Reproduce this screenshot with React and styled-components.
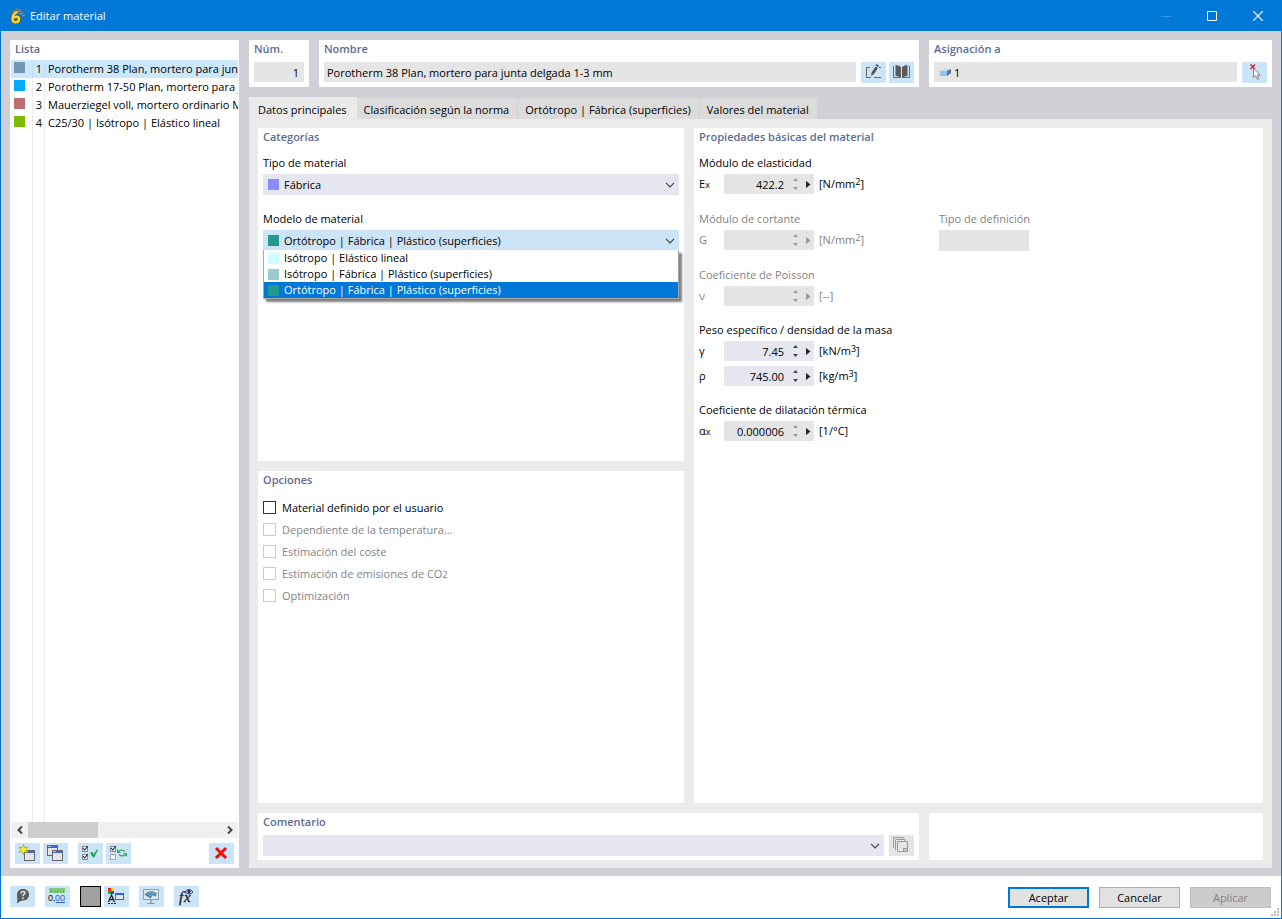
import React, { useState } from 'react';
import styled, { createGlobalStyle, css } from 'styled-components';

const GlobalStyle = createGlobalStyle`
  * {
    box-sizing: border-box;
  }

  body {
    margin: 0;
    font-family: 'Open Sans', 'Noto Sans', sans-serif;
    font-size: 11px;
    line-height: 18px;
    color: #000;
  }

  button, input, select {
    font: inherit;
    color: inherit;
    border: none;
    border-radius: 0;
    padding: 0;
    margin: 0;
  }
`;

// Dialog window frame
const Window = styled.div`
  display: flex;
  flex-direction: column;
  min-height: 100vh;
  border: 1px solid #0078d7;
  border-top: none;
  background-color: #fff;
`;

const TitleBar = styled.header`
  display: flex;
  align-items: center;
  height: 31px;
  padding-left: 8px;
  background-color: #0078d7;
  color: #fff;
`;

const WindowTitle = styled.h1`
  flex: 1;
  margin: 0 0 0 5px;
  font-size: 11px;
  font-weight: normal;
`;

const CaptionButton = styled.button`
  display: flex;
  align-items: center;
  justify-content: center;
  width: 46px;
  height: 31px;
  background: none;
  color: ${({ disabled }) => (disabled ? '#3b97e0' : '#fff')};
`;

const Body = styled.main`
  flex: 1;
  display: flex;
  gap: 10px;
  padding: 9px 9px 8px;
  background-color: #d1d0d6;
`;

const Panel = styled.section`
  display: flex;
  flex-direction: column;
  min-width: 0;
  padding: 0 5px 4px;
  background-color: #fff;
`;

const PanelTitle = styled.h2`
  margin: 0 0 ${({ $space }) => $space || 4}px;
  font-size: 11px;
  line-height: 18px;
  font-weight: 600;
  color: #5c6c93;
`;

// Left column with the list of materials
const ListPanel = styled(Panel)`
  width: 229px;
  padding: 0 1px 4px;
`;

const ListTitle = styled(PanelTitle)`
  margin: 0 0 2px 4px;
`;

const MaterialList = styled.ul`
  flex: 1;
  margin: 0;
  padding: 0;
  list-style: none;
  overflow: hidden;
  background: linear-gradient(#ebebeb, #ebebeb) 21px 0 / 1px 100% no-repeat,
    linear-gradient(#ebebeb, #ebebeb) 33px 0 / 1px 100% no-repeat;
`;

const MaterialRow = styled.li`
  display: grid;
  grid-template-columns: 11px 17px 1fr;
  align-items: center;
  height: 18px;
  padding-left: 3px;
  white-space: nowrap;
  cursor: default;
  ${({ $selected }) => $selected && css`
    background-color: rgba(153, 209, 255, 0.5);
  `}
`;

const RowNumber = styled.span`
  text-align: right;
`;

const RowName = styled.span`
  padding-left: 6px;
`;

const Swatch = styled.span`
  flex: none;
  width: 11px;
  height: 11px;
  background-color: ${({ $color }) => $color};
`;

const RowSwatch = styled(Swatch)`
  margin-bottom: 3px;
`;

const ScrollBar = styled.div`
  display: flex;
  justify-content: space-between;
  height: 16px;
  margin-bottom: 5px;
  background-color: #f0f0f0;
`;

const ScrollArrow = styled.button`
  display: flex;
  align-items: center;
  justify-content: center;
  width: 17px;
  background: none;
`;

const ScrollThumb = styled.div`
  width: 70px;
  margin-right: auto;
  background-color: #cdcdcd;
`;

const Toolbar = styled.div`
  display: flex;
  gap: 3px;
  padding: 0 4px;
`;

const IconButton = styled.button`
  flex: none;
  width: 25px;
  height: 21px;
  margin-left: ${({ $space }) => $space || '0'};
  background-color: ${({ disabled }) => (disabled ? '#e5e5e5' : '#cce4f7')};

  svg {
    display: block;
  }
`;

const Content = styled.div`
  flex: 1;
  display: flex;
  flex-direction: column;
  min-width: 0;
`;

const HeaderRow = styled.div`
  display: grid;
  grid-template-columns: 60px 600fr 343fr;
  gap: 10px;
  margin-bottom: 10px;
`;

const FieldLine = styled.div`
  display: flex;
  gap: 5px;
`;

const ButtonPair = styled.div`
  display: flex;
  gap: 3px;
`;

const TextInput = styled.input`
  flex: 1;
  width: 100%;
  min-width: 0;
  height: 20px;
  padding: 1px 5px 0 3px;
  background-color: #e5e5e5;
  text-align: ${({ $align }) => $align || 'left'};
  outline: none;
`;

const AssignBox = styled.div`
  flex: 1;
  display: flex;
  align-items: center;
  height: 20px;
  padding-left: 6px;
  background-color: #e5e5e5;
`;

const TabList = styled.div`
  display: flex;
  align-items: flex-end;
  height: 22px;
`;

const Tab = styled.button`
  height: ${({ $active }) => ($active ? 23 : 21)}px;
  margin-bottom: ${({ $active }) => ($active ? -1 : 0)}px;
  padding: ${({ $active }) => ($active ? '2px 9px 0' : '2px 8px 0 7px')};
  border-right: 1px solid ${({ $active }) => ($active ? '#ebebeb' : '#d1d0d6')};
  background-color: ${({ $active }) => ($active ? '#ebebeb' : '#dcdcdc')};
`;

const TabPage = styled.div`
  flex: 1;
  display: flex;
  flex-direction: column;
  gap: 10px;
  padding: 9px 9px 8px;
  background-color: #ebebeb;
`;

const MainGrid = styled.div`
  flex: 1;
  display: grid;
  grid-template-columns: 426fr 569fr;
  grid-template-rows: 1fr 1fr;
  gap: 10px;
`;

const TallPanel = styled(Panel)`
  grid-column: 2;
  grid-row: 1 / 3;
`;

const BottomGrid = styled.div`
  display: grid;
  grid-template-columns: 661fr 334fr;
  gap: 10px;
`;

const FieldLabel = styled.label`
  display: block;
  margin-bottom: 2px;
  color: ${({ $muted }) => ($muted ? '#838383' : '#000')};
`;

const SelectGroup = styled.div`
  position: relative;
  margin-bottom: 15px;
`;

const SelectBox = styled.div`
  flex: 1;
  display: flex;
  align-items: center;
  gap: 5px;
  height: 21px;
  padding: 0 4px 0 5px;
  background-color: ${({ $open }) => ($open ? '#cce4f7' : '#e6e6f0')};
`;

const Select = styled.select`
  flex: 1;
  min-width: 0;
  height: 20px;
  appearance: none;
  background: none;
  outline: none;
`;

const ComboInput = styled.input`
  flex: 1;
  min-width: 0;
  background: none;
  outline: none;
`;

// Opened drop-down, lies over the panel
const OptionList = styled.ul`
  position: absolute;
  top: 40px;
  left: 0;
  right: 0;
  margin: 0;
  padding: 0;
  list-style: none;
  border: 1px solid #a8a8a8;
  border-top: none;
  background-color: #fff;
  box-shadow: 3px 3px 2px rgba(0, 0, 0, 0.5);
`;

const Option = styled.li`
  display: flex;
  align-items: center;
  gap: 5px;
  height: 16px;
  padding-left: 4px;
  cursor: default;
  background-color: ${({ $selected }) => ($selected ? '#0078d7' : '#fff')};
  color: ${({ $selected }) => ($selected ? '#fff' : '#000')};
`;

const CheckRow = styled.label`
  display: flex;
  align-items: center;
  gap: 6px;
  height: 22px;
  color: ${({ $muted }) => ($muted ? '#838383' : '#000')};
`;

const CheckBox = styled.input`
  appearance: none;
  width: 13px;
  height: 13px;
  border: 1px solid #333;
  background-color: #fff;

  &:checked {
    background-color: #5c6c93;
  }

  &:disabled {
    border-color: #ccc;
  }
`;

// Group of numeric values under one caption
const PropertyGroup = styled.div`
  display: flex;
  margin-bottom: ${({ $space }) => $space || 15}px;
`;

const PropertyColumn = styled.div`
  width: 240px;
  white-space: nowrap;
  color: ${({ $muted }) => ($muted ? '#838383' : '#000')};
`;

const ValueRow = styled.div`
  display: flex;
  align-items: center;
  height: 20px;

  & + & {
    margin-top: 5px;
  }
`;

const Symbol = styled.label`
  width: 25px;
`;

const Small = styled.span`
  font-size: 9px;
  line-height: 0;
`;

const Raised = styled.sup`
  font-size: 9px;
  line-height: 0;
  vertical-align: 3px;
`;

const SpinBox = styled.div`
  display: flex;
  align-items: center;
  width: 90px;
  height: 20px;
  margin-right: 5px;
  background-color: ${({ $editable }) => ($editable ? '#e6e6f0' : '#e5e5e5')};
`;

const SpinInput = styled.input`
  width: 60px;
  height: 20px;
  padding-top: 1px;
  background: none;
  text-align: right;
  outline: none;
`;

const ShortField = styled.input`
  display: block;
  width: 90px;
  height: 21px;
  background-color: #e5e5e5;
`;

const Footer = styled.footer`
  display: flex;
  gap: 10px;
  height: 42px;
  padding: 10px 10px 0 9px;
`;

const FooterTools = styled.div`
  flex: 1;
  display: flex;
  gap: 10px;
`;

const DialogActions = styled.div`
  display: flex;
  gap: 10px;
  padding-top: 1px;
`;

const ColorButton = styled.button`
  width: 21px;
  height: 21px;
  border: 1px solid #000;
  background-color: #a0a0a0;
`;

const DialogButton = styled.button`
  width: 81px;
  height: 21px;
  border: ${({ $primary }) => ($primary ? '2px solid #0078d7' : '1px solid #adadad')};
  background-color: #e1e1e1;

  &:disabled {
    border-color: #bfbfbf;
    background-color: #ccc;
    color: #838383;
  }
`;

// Resize grip in the window corner
const Grip = styled.svg`
  position: absolute;
  right: 3px;
  bottom: 3px;
`;

const Glyph = ({ children }) => (
  <svg width="25" height="21" viewBox="0 0 25 21" fill="none" aria-hidden="true">
    {children}
  </svg>
);

const Chevron = () => (
  <svg width="10" height="6" viewBox="0 0 10 6" fill="none" stroke="#444" strokeWidth="1.2" aria-hidden="true">
    <path d="M1 .8 5 4.8 9 .8" />
  </svg>
);

const SpinArrows = ({ color, next }) => (
  <svg width="27" height="20" viewBox="0 0 27 20" aria-hidden="true">
    <path d="M9 7h5L11.5 4zM9 13h5l-2.500 3z" fill={color} />
    <path d="M22 7v7l4.500-3.500z" fill={next} />
  </svg>
);

const AppIcon = () => (
  <svg width="16" height="18" viewBox="0 0 16 18" aria-hidden="true">
    <path d="M2 5 7 1l6 2 3 7-3-1-1-3z" fill="#5d6b79" />
    <path d="m4 5 5-3M7 6l5-3M10 7l4-1M13 9l3-1" stroke="#a5b2bd" strokeWidth=".7" />
    <path d="M8.500 5C5 5 3.500 9 3.500 12c0 5 6.500 4 6.500 0 0-3-4.500-3-5.500-1" fill="none" stroke="#6f5510" strokeWidth="4" />
    <path d="M8.500 5C5 5 3.500 9 3.500 12c0 5 6.500 4 6.500 0 0-3-4.500-3-5.500-1" fill="none" stroke="#ffd83a" strokeWidth="2.4" />
  </svg>
);

const MiniWindow = ({ x, y }) => (
  <g shapeRendering="crispEdges">
    <rect x={x} y={y} width="11" height="11" fill="#666" />
    <rect x={x + 1} y={y + 1} width="9" height="2" fill="#3c62e8" />
    <rect x={x + 1} y={y + 1} width="3" height="1" fill="#b8c6ec" />
    <rect x={x + 1} y={y + 3} width="9" height="7" fill="#e2e6ea" />
  </g>
);

const NewIcon = () => (
  <Glyph>
    <MiniWindow x={9} y={7} />
    <path d="m8.500 1.500 1.200 3.200 3.300-.7-2 2.600 2 2.800-3.300-.7-1.200 3.300-1.200-3.300L4 9.400l2-2.800L4 4l3.300.7z" fill="#fff21c" stroke="#8b8b30" strokeWidth=".6" />
  </Glyph>
);

const CopyIcon = () => (
  <Glyph>
    <MiniWindow x={4} y={2} />
    <MiniWindow x={9} y={7} />
  </Glyph>
);

const SmallCheck = ({ x, y, checked }) => (
  <g>
    <rect x={x + 0.5} y={y + 0.5} width="5" height="5" fill="#eef5fa" stroke={checked ? '#888' : '#aaa'} />
    {checked && <path d={`M${x + 1} ${y + 2}l1.800 2 3-4`} stroke="#222" strokeWidth="1.1" />}
  </g>
);

const SelectAllIcon = () => (
  <Glyph>
    <SmallCheck x={4} y={3} checked />
    <SmallCheck x={4} y={11} checked />
    <path d="M12 9.500 14.500 9l1 2.500L19 6.500l1 .5-4 7.500h-1z" fill="#14a44a" />
  </Glyph>
);

const InvertIcon = () => (
  <Glyph>
    <SmallCheck x={4} y={3} checked />
    <SmallCheck x={4} y={11} />
    <path d="M13 8q3-2 6 .5M19 12q-3 2-6-.5" stroke="#3ba566" strokeWidth="1.4" />
    <path d="M11 6v4h4zM21 14v-4h-4z" fill="#3ba566" />
  </Glyph>
);

const DeleteIcon = () => (
  <Glyph>
    <path d="m7 5 10 10M17 5 7 15" stroke="#fa0808" strokeWidth="3" />
  </Glyph>
);

const EditIcon = () => (
  <Glyph>
    <path d="M9 5.500H5.500v10H10M13 15.500h7M18 5.500h2" stroke="#666" />
    <path d="m10 14 .7-3.500L14.500 4.500l2.500 1.500-4 6z" fill="#555" />
    <path d="M14.500 3.500 15.500 2l2.500 1.600-.8 1.500z" fill="#555" />
  </Glyph>
);

const BookIcon = () => (
  <Glyph>
    <path d="M6.500 3q3 0 5.500 2v11q-2.500-2-5.500-2zM18.500 3q-3 0-5.500 2v11q2.500-2 5.500-2z" fill="#5a5a5a" />
    <path d="M4.500 4v11.500h7M20.500 4v11.500h-7" stroke="#6a6a6a" />
  </Glyph>
);

const PickIcon = () => (
  <Glyph>
    <path d="M8.500 2.500 13 7M13 2.500 8.500 7" stroke="#e01818" strokeWidth="1.3" />
    <path d="M11.500 6v9.500l2-2 2 4 1.500-1-1.800-3.500h3z" fill="#fff" stroke="#777" strokeWidth=".9" />
  </Glyph>
);

const SolidIcon = () => (
  <svg width="11" height="7" viewBox="0 0 11 7" aria-hidden="true">
    <path d="M0 2 3.500 0H11L7 2z" fill="#c9dcec" />
    <path d="M0 2h7v5H0z" fill="#8fc3f3" />
    <path d="m7 2 4-2v4L7 7z" fill="#55708f" />
  </svg>
);

const PagesIcon = () => (
  <Glyph>
    <path d="M4.500 13v-10.500H14v2M6.500 15V4.500H16v2" stroke="#999" />
    <path d="M8.500 6.500h10v10h-10zM14.500 16v-2.500H18M14.500 13.500l3.500 2.500" stroke="#999" />
  </Glyph>
);

const HelpIcon = () => (
  <Glyph>
    <path d="M13 3c4 0 6 2.500 6 5.500s-2 6-6 6c-2 0-3 1-6.500 3 1.500-3 .5-5 .5-8.500S9 3 13 3z" fill="#5b5b5b" />
    <path d="M11 7.500c0-3 4.500-2.500 4-.3-.3 1.300-2 1.300-2 3M13 11.500V13" stroke="#d5e8f6" strokeWidth="1.5" />
  </Glyph>
);

const UnitsIcon = () => (
  <Glyph>
    <rect x="4" y="2" width="16" height="5" fill="#7ecb7e" />
    <path d="M6.500 4v3M9.500 5v2M12.500 4v3M15.500 5v2M18.500 4v3" stroke="#4d9a4d" strokeWidth=".7" />
    <text x="3" y="15" fontFamily="Liberation Sans, sans-serif" fontSize="9" fill="#111">0,</text>
    <text x="10" y="15" fontFamily="Liberation Sans, sans-serif" fontSize="9" fill="#2a62d8">00</text>
    <path d="M11 16.500h9" stroke="#2a62d8" />
  </Glyph>
);

const DisplayIcon = () => (
  <Glyph>
    <path d="M4 2h3v3H4z" fill="#f02020" />
    <path d="M7 2h3v3H7z" fill="#f4e800" />
    <path d="M4 5h3v3H4z" fill="#18b030" />
    <path d="M7 5h3v3H7z" fill="#2048f0" />
    <path d="M4.500 16 7.500 9l3 7M5.500 13.500h4" stroke="#222" strokeWidth="1.3" />
    <path d="M4 17.500h8" stroke="#222" strokeDasharray="2 1" />
    <rect x="11.500" y="7.500" width="8" height="6" fill="#e2e6ea" stroke="#666" />
    <path d="M12 8.500h7" stroke="#2f5bea" />
  </Glyph>
);

const ViewIcon = () => (
  <Glyph>
    <rect x="4.500" y="3.500" width="15" height="10" fill="#d9eaf7" stroke="#9a9ea2" />
    <path d="M12 14v3M8.500 17.500h7" stroke="#8d9296" strokeWidth="1.2" />
    <path d="M5.500 8.500Q11 2.500 18 7.500l-1.500 3-3-1-2 3z" fill="#4f7ea3" />
    <path d="M8 8.500Q12 5 16.500 8.500M10 10q2.500-2 5 0" stroke="#a9c8de" strokeWidth=".7" />
  </Glyph>
);

const FormulaIcon = () => (
  <Glyph>
    <text x="5" y="16" fontFamily="Liberation Serif, serif" fontStyle="italic" fontSize="15" fill="#222" stroke="#222" strokeWidth=".3">f</text>
    <text x="10" y="16" fontFamily="Liberation Serif, serif" fontStyle="italic" fontSize="15" fill="#222" stroke="#222" strokeWidth=".3">x</text>
    <path d="M11 6q4-5 8 0-4 4-8 0z" fill="#dde6f4" stroke="#34346e" />
    <circle cx="15" cy="5.600" r="1.700" fill="#29296a" />
  </Glyph>
);

const materials = [
  { id: 1, name: 'Porotherm 38 Plan, mortero para junta delgada 1-3 mm', color: '#7396b4' },
  { id: 2, name: 'Porotherm 17-50 Plan, mortero para junta delgada', color: '#00aaff' },
  { id: 3, name: 'Mauerziegel voll, mortero ordinario M5', color: '#ba7070' },
  { id: 4, name: 'C25/30 | Isótropo | Elástico lineal', color: '#7dbb00' },
];

const models = [
  { name: 'Isótropo | Elástico lineal', color: '#ccffff' },
  { name: 'Isótropo | Fábrica | Plástico (superficies)', color: '#99cccc' },
  { name: 'Ortótropo | Fábrica | Plástico (superficies)', color: '#229a90' },
];

const tabs = [
  'Datos principales',
  'Clasificación según la norma',
  'Ortótropo | Fábrica (superficies)',
  'Valores del material',
];

const options = [
  { label: 'Material definido por el usuario', enabled: true },
  { label: 'Dependiente de la temperatura...' },
  { label: 'Estimación del coste' },
  { label: <>Estimación de emisiones de CO<Small>2</Small></> },
  { label: 'Optimización' },
];

const Value = ({ id, symbol, sub, value, unit, power, close = ']', editable, disabled }) => (
  <ValueRow>
    <Symbol htmlFor={id}>
      {symbol}
      {sub && <Small>{sub}</Small>}
    </Symbol>
    <SpinBox $editable={editable}>
      <SpinInput id={id} defaultValue={value} readOnly={!editable} disabled={disabled} />
      <SpinArrows color={editable ? '#444' : '#999'} next={disabled ? '#999' : '#222'} />
    </SpinBox>
    <span>
      {unit}
      {power && <Raised>{power}</Raised>}
      {close}
    </span>
  </ValueRow>
);

const App = () => {
  const [selected, setSelected] = useState(1);
  const [activeTab, setActiveTab] = useState(0);
  const [model, setModel] = useState(2);
  const [open, setOpen] = useState(true);

  const chooseModel = (index) => {
    setModel(index);
    setOpen(false);
  };

  return (
    <Window>
      <GlobalStyle />
      <TitleBar>
        <AppIcon />
        <WindowTitle>Editar material</WindowTitle>
        <CaptionButton aria-label="Minimizar" disabled>
          <svg width="10" height="10" stroke="currentColor"><path d="M0 5.500h10" /></svg>
        </CaptionButton>
        <CaptionButton aria-label="Maximizar">
          <svg width="10" height="10" fill="none" stroke="currentColor"><path d="M.5.500h9v9h-9z" /></svg>
        </CaptionButton>
        <CaptionButton aria-label="Cerrar">
          <svg width="10" height="10" stroke="currentColor" strokeWidth="1.2"><path d="m0 0 10 10M10 0 0 10" /></svg>
        </CaptionButton>
      </TitleBar>

      <Body>
        <ListPanel>
          <ListTitle>Lista</ListTitle>
          <MaterialList>
            {materials.map((m) => (
              <MaterialRow key={m.id} $selected={m.id === selected} onClick={() => setSelected(m.id)}>
                <RowSwatch $color={m.color} />
                <RowNumber>{m.id}</RowNumber>
                <RowName>{m.name}</RowName>
              </MaterialRow>
            ))}
          </MaterialList>
          <ScrollBar>
            <ScrollArrow aria-label="Desplazar a la izquierda">
              <svg width="6" height="8" fill="none" stroke="#444" strokeWidth="2"><path d="M5 .500 1.500 4 5 7.500" /></svg>
            </ScrollArrow>
            <ScrollThumb />
            <ScrollArrow aria-label="Desplazar a la derecha">
              <svg width="6" height="8" fill="none" stroke="#444" strokeWidth="2"><path d="M1 .500 4.500 4 1 7.500" /></svg>
            </ScrollArrow>
          </ScrollBar>
          <Toolbar>
            <IconButton aria-label="Nuevo"><NewIcon /></IconButton>
            <IconButton aria-label="Copiar"><CopyIcon /></IconButton>
            <IconButton aria-label="Seleccionar todo" $space="7px"><SelectAllIcon /></IconButton>
            <IconButton aria-label="Invertir selección"><InvertIcon /></IconButton>
            <IconButton aria-label="Eliminar" $space="auto"><DeleteIcon /></IconButton>
          </Toolbar>
        </ListPanel>

        <Content>
          <HeaderRow>
            <Panel>
              <PanelTitle as="label" htmlFor="number">Núm.</PanelTitle>
              <FieldLine>
                <TextInput id="number" $align="right" defaultValue="1" readOnly />
              </FieldLine>
            </Panel>
            <Panel>
              <PanelTitle as="label" htmlFor="name">Nombre</PanelTitle>
              <FieldLine>
                <TextInput id="name" defaultValue="Porotherm 38 Plan, mortero para junta delgada 1-3 mm" readOnly />
                <ButtonPair>
                  <IconButton aria-label="Editar nombre"><EditIcon /></IconButton>
                  <IconButton aria-label="Biblioteca"><BookIcon /></IconButton>
                </ButtonPair>
              </FieldLine>
            </Panel>
            <Panel>
              <PanelTitle as="label" htmlFor="assigned">Asignación a</PanelTitle>
              <FieldLine>
                <AssignBox>
                  <SolidIcon />
                  <TextInput id="assigned" defaultValue="1" readOnly />
                </AssignBox>
                <IconButton aria-label="Seleccionar objetos"><PickIcon /></IconButton>
              </FieldLine>
            </Panel>
          </HeaderRow>

          <TabList role="tablist">
            {tabs.map((tab, i) => (
              <Tab key={tab} role="tab" aria-selected={i === activeTab} $active={i === activeTab} onClick={() => setActiveTab(i)}>
                {tab}
              </Tab>
            ))}
          </TabList>

          <TabPage>
            <MainGrid>
              <Panel>
                <PanelTitle $space={8}>Categorías</PanelTitle>
                <SelectGroup>
                  <FieldLabel htmlFor="type">Tipo de material</FieldLabel>
                  <SelectBox>
                    <Swatch $color="#8c8cff" />
                    <Select id="type"><option>Fábrica</option></Select>
                    <Chevron />
                  </SelectBox>
                </SelectGroup>
                <SelectGroup>
                  <FieldLabel htmlFor="model">Modelo de material</FieldLabel>
                  <SelectBox $open={open} onClick={() => setOpen(!open)}>
                    <Swatch $color={models[model].color} />
                    <Select id="model" value={model} onChange={(e) => chooseModel(Number(e.target.value))}>
                      {models.map((m, i) => <option key={m.name} value={i}>{m.name}</option>)}
                    </Select>
                    <Chevron />
                  </SelectBox>
                  {open && (
                    <OptionList role="listbox">
                      {models.map((m, i) => (
                        <Option key={m.name} role="option" aria-selected={i === model} $selected={i === model} onClick={() => chooseModel(i)}>
                          <Swatch $color={m.color} />
                          {m.name}
                        </Option>
                      ))}
                    </OptionList>
                  )}
                </SelectGroup>
              </Panel>

              <TallPanel>
                <PanelTitle $space={8}>Propiedades básicas del material</PanelTitle>
                <PropertyGroup $space={16}>
                  <PropertyColumn>
                    <FieldLabel htmlFor="ex">Módulo de elasticidad</FieldLabel>
                    <Value id="ex" symbol="E" sub="x" value="422.2" unit="[N/mm" power="2" />
                  </PropertyColumn>
                </PropertyGroup>
                <PropertyGroup>
                  <PropertyColumn $muted>
                    <FieldLabel $muted htmlFor="g">Módulo de cortante</FieldLabel>
                    <Value id="g" symbol="G" unit="[N/mm" power="2" disabled />
                  </PropertyColumn>
                  <PropertyColumn $muted>
                    <FieldLabel $muted htmlFor="definition">Tipo de definición</FieldLabel>
                    <ShortField id="definition" disabled />
                  </PropertyColumn>
                </PropertyGroup>
                <PropertyGroup>
                  <PropertyColumn $muted>
                    <FieldLabel $muted htmlFor="nu">Coeficiente de Poisson</FieldLabel>
                    <Value id="nu" symbol="ν" unit="[--" disabled />
                  </PropertyColumn>
                </PropertyGroup>
                <PropertyGroup>
                  <PropertyColumn>
                    <FieldLabel htmlFor="gamma">Peso específico / densidad de la masa</FieldLabel>
                    <Value id="gamma" symbol="γ" value="7.45" unit="[kN/m" power="3" editable />
                    <Value id="rho" symbol="ρ" value="745.00" unit="[kg/m" power="3" editable />
                  </PropertyColumn>
                </PropertyGroup>
                <PropertyGroup>
                  <PropertyColumn>
                    <FieldLabel htmlFor="alpha">Coeficiente de dilatación térmica</FieldLabel>
                    <Value id="alpha" symbol="α" sub="x" value="0.000006" unit="[1/°C" />
                  </PropertyColumn>
                </PropertyGroup>
              </TallPanel>

              <Panel>
                <PanelTitle $space={8}>Opciones</PanelTitle>
                {options.map((option, i) => (
                  <CheckRow key={i} $muted={!option.enabled}>
                    <CheckBox type="checkbox" disabled={!option.enabled} />
                    <span>{option.label}</span>
                  </CheckRow>
                ))}
              </Panel>
            </MainGrid>

            <BottomGrid>
              <Panel>
                <PanelTitle as="label" htmlFor="comment">Comentario</PanelTitle>
                <FieldLine>
                  <SelectBox>
                    <ComboInput id="comment" />
                    <Chevron />
                  </SelectBox>
                  <IconButton aria-label="Comentarios" disabled><PagesIcon /></IconButton>
                </FieldLine>
              </Panel>
              <Panel />
            </BottomGrid>
          </TabPage>
        </Content>
      </Body>

      <Footer>
        <FooterTools>
          <IconButton aria-label="Ayuda"><HelpIcon /></IconButton>
          <IconButton aria-label="Unidades"><UnitsIcon /></IconButton>
          <ButtonPair>
            <ColorButton aria-label="Color" />
            <IconButton aria-label="Propiedades de visualización"><DisplayIcon /></IconButton>
          </ButtonPair>
          <IconButton aria-label="Vista"><ViewIcon /></IconButton>
          <IconButton aria-label="Fórmula"><FormulaIcon /></IconButton>
        </FooterTools>
        <DialogActions>
          <DialogButton $primary>Aceptar</DialogButton>
          <DialogButton>Cancelar</DialogButton>
          <DialogButton disabled>Aplicar</DialogButton>
        </DialogActions>
        <Grip width="8" height="8" fill="#bbb" aria-hidden="true">
          <path d="M6 0h2v2H6zM3 3h2v2H3zM6 3h2v2H6zM0 6h2v2H0zM3 6h2v2H3zM6 6h2v2H6z" />
        </Grip>
      </Footer>
    </Window>
  );
};

export default App;
